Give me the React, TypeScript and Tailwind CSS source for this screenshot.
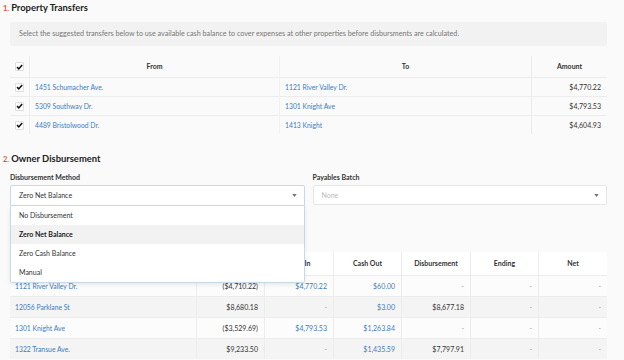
const transfers = [
  { from: "1451 Schumacher Ave.", to: "1121 River Valley Dr.", amount: "$4,770.22" },
  { from: "5309 Southway Dr.", to: "1301 Knight Ave", amount: "$4,793.53" },
  { from: "4489 Bristolwood Dr.", to: "1413 Knight", amount: "$4,604.93" },
]

const balances = [
  { name: "1121 River Valley Dr.", start: "($4,710.22)", cashIn: "$4,770.22", cashOut: "$60.00", disb: "-" },
  { name: "12056 Parklane St", start: "$8,680.18", cashIn: "-", cashOut: "$3.00", disb: "$8,677.18" },
  { name: "1301 Knight Ave", start: "($3,529.69)", cashIn: "$4,793.53", cashOut: "$1,263.84", disb: "-" },
  { name: "1322 Transue Ave.", start: "$9,233.50", cashIn: "-", cashOut: "$1,435.59", disb: "$7,797.91" },
]

const methods = ["No Disbursement", "Zero Net Balance", "Zero Cash Balance", "Manual"]

function Check() {
  return (
    <div className="w-[9px] h-[9px] bg-white border border-[#dedede] rounded-[1px] flex items-center justify-center">
      <svg viewBox="0 0 10 10" className="w-[8px] h-[8px]">
        <path d="M1.5 5.2 L4 7.8 L8.8 2" fill="none" stroke="#111" strokeWidth="2.2" />
      </svg>
    </div>
  )
}

function Caret() {
  return (
    <svg viewBox="0 0 6 4" className="w-[5px] h-[3px]">
      <path d="M0 0 H6 L3 4 Z" fill="#777" />
    </svg>
  )
}

function SectionTitle({ n, title }: { n: string; title: string }) {
  return (
    <div className="flex items-baseline gap-[2px] text-[9.4px] leading-[14px] font-bold text-[#222] ml-[-7px]">
      <span className="text-[7.5px] text-[#e5533d]">{n}</span>
      <span>{title}</span>
    </div>
  )
}

export default function App() {
  return (
    <div className="w-[624px] h-[360px] overflow-hidden bg-[#fafafa] px-[10px] pt-[1px] text-[7px] text-[#333]" style={{ fontFamily: "Lato, 'Open Sans', sans-serif" }}>
      <SectionTitle n="1." title="Property Transfers" />

      <div className="mt-[6px] h-[24px] bg-[#f2f2f2] rounded-[2px] flex items-center px-[9px] text-[7.2px] text-[#777] w-[597px]">
        Select the suggested transfers below to use available cash balance to cover expenses at other properties before disbursments are calculated.
      </div>

      <div className="mt-[10px] w-[597px] grid grid-cols-[20px_250px_252px_1fr]">
        <div className="h-[21px] flex items-center justify-center border-r border-[#ececec]"><Check /></div>
        <div className="h-[21px] flex items-center justify-center font-bold border-r border-[#f1f1f1]">From</div>
        <div className="h-[21px] flex items-center justify-center font-bold border-r border-[#ececec]">To</div>
        <div className="h-[21px] flex items-center justify-center font-bold">Amount</div>
        {transfers.map((t) => (
          <div key={t.from} className="contents">
            <div className="h-[19px] flex items-center justify-center border-t border-r border-[#ececec]"><Check /></div>
            <div className="h-[19px] flex items-center px-[5px] text-[6.8px] text-[#3c7cc0] border-t border-r border-[#f1f1f1] border-t-[#ececec]">{t.from}</div>
            <div className="h-[19px] flex items-center px-[5px] text-[6.8px] text-[#3c7cc0] border-t border-r border-[#ececec]">{t.to}</div>
            <div className="h-[19px] flex items-center justify-end pr-[6px] border-t border-[#ececec]">{t.amount}</div>
          </div>
        ))}
      </div>

      <div className="mt-[18px]">
        <SectionTitle n="2." title="Owner Disbursement" />
      </div>

      <div className="mt-[6px] w-[597px] grid grid-cols-2 gap-[8px]">
        <div>
          <div className="font-bold text-[#333] leading-[9px]">Disbursement Method</div>
          <div className="relative mt-[3px]">
            <div className="h-[21px] bg-white border border-[#c5d9ea] rounded-t-[2px] flex items-center justify-between pl-[8px] pr-[7px]">
              <span>Zero Net Balance</span>
              <Caret />
            </div>
            <div className="absolute left-0 top-full w-full z-10 bg-white border border-t-0 border-[#c5d9ea] rounded-b-[2px] shadow-[0_2px_4px_rgba(0,0,0,0.08)]">
              {methods.map((m) => (
                <div
                  key={m}
                  className={
                    m === "Zero Net Balance"
                      ? "h-[19px] flex items-center pl-[8px] bg-[#f2f2f2] font-bold text-[#222]"
                      : "h-[19px] flex items-center pl-[8px]"
                  }
                >
                  {m}
                </div>
              ))}
            </div>
          </div>
        </div>
        <div>
          <div className="font-bold text-[#333] leading-[9px]">Payables Batch</div>
          <div className="mt-[3px] h-[20px] bg-white border border-[#e6e6e6] rounded-[2px] flex items-center justify-between pl-[8px] pr-[7px]">
            <span className="text-[#bbb]">None</span>
            <Caret />
          </div>
        </div>
      </div>

      <div className="mt-[46px] w-[597px] grid grid-cols-[187px_68px_69px_68px_69px_68px_1fr]">
        {["Property", "Beginning", "Cash In", "Cash Out", "Disbursement", "Ending", "Net"].map((h, i) => (
          <div key={h} className={i < 6 ? "h-[23px] flex items-center justify-center font-bold bg-white border-r border-[#ececec]" : "h-[23px] flex items-center justify-center font-bold bg-white"}>
            {h}
          </div>
        ))}
        {balances.map((b, r) => {
          const bg = r % 2 === 0 ? "bg-[#fcfcfc]" : "bg-[#f4f4f4]"
          const cell = `h-[21px] flex items-center border-t border-r border-[#ececec] ${bg}`
          return (
            <div key={b.name} className="contents">
              <div className={`${cell} px-[5px] text-[6.8px] text-[#3c7cc0]`}>{b.name}</div>
              <div className={`${cell} justify-end pr-[6px]`}>{b.start}</div>
              <div className={`${cell} justify-end pr-[6px] ${b.cashIn === "-" ? "text-[#999]" : "text-[#3c7cc0]"}`}>{b.cashIn}</div>
              <div className={`${cell} justify-end pr-[6px] text-[#3c7cc0]`}>{b.cashOut}</div>
              <div className={`${cell} justify-end pr-[6px] ${b.disb === "-" ? "text-[#999]" : ""}`}>{b.disb}</div>
              <div className={`${cell} justify-end pr-[6px] text-[#999]`}>-</div>
              <div className={`h-[21px] flex items-center border-t border-[#ececec] ${bg} justify-end pr-[6px] text-[#999]`}>-</div>
            </div>
          )
        })}
      </div>
    </div>
  )
}
